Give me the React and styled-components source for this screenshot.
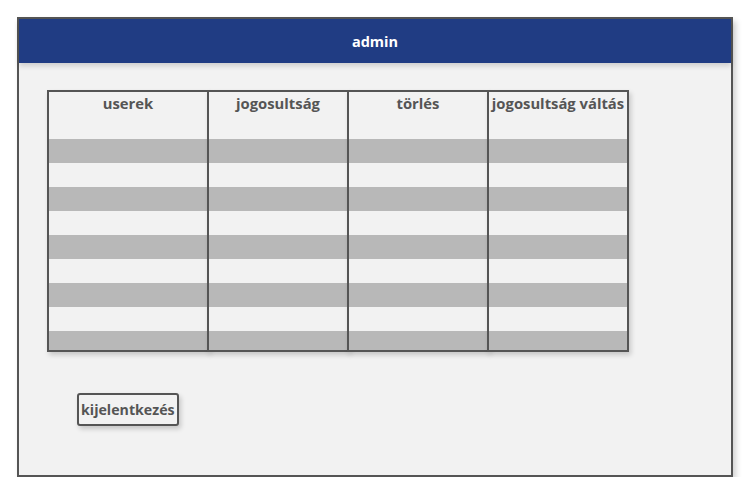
import React from "react";
import styled, { createGlobalStyle } from "styled-components";

const Global = createGlobalStyle`
  body {
    margin: 0;
    background: #ffffff;
    font-family: "Open Sans", "DejaVu Sans", sans-serif;
  }
`;

const Frame = styled.div`
  box-sizing: border-box;
  margin: 17px 0 0 17px;
  width: 716px;
  height: 460px;
  border: 2px solid #555555;
  background: #f2f2f2;
  box-shadow: 3px 4px 6px rgba(0, 0, 0, 0.18);
  display: flex;
  flex-direction: column;
`;

const TopBar = styled.div`
  height: 44px;
  background: #203c83;
  color: #ffffff;
  font-weight: 700;
  font-size: 14.5px;
  display: flex;
  align-items: center;
  justify-content: center;
  box-shadow: 0 3px 5px rgba(0, 0, 0, 0.15);
`;

const Content = styled.div`
  padding: 27px 0 0 28px;
  display: flex;
  flex-direction: column;
  align-items: flex-start;
`;

const Table = styled.div`
  display: flex;
`;

const Column = styled.div`
  box-sizing: border-box;
  width: ${(p) => p.$width}px;
  height: 262px;
  border: 2px solid #555555;
  margin-left: ${(p) => (p.$first ? 0 : -2)}px;
  background: #f2f2f2;
  overflow: hidden;
  box-shadow: 2px 3px 5px rgba(0, 0, 0, 0.18);
  display: flex;
  flex-direction: column;
`;

const HeadCell = styled.div`
  height: 46px;
  flex-shrink: 0;
  padding-top: 1px;
  text-align: center;
  font-weight: 700;
  font-size: 14.8px;
  line-height: 20px;
  color: #555555;
  white-space: nowrap;
`;

const Stripe = styled.div`
  height: 24px;
  flex-shrink: 0;
  background: ${(p) => (p.$dark ? "#b8b8b8" : "#f2f2f2")};
`;

const LogoutButton = styled.button`
  margin: 41px 0 0 30px;
  box-sizing: border-box;
  height: 33px;
  padding: 0 2px;
  border: 2px solid #555555;
  border-radius: 3px;
  background: #f2f2f2;
  color: #555555;
  font-family: "Open Sans", "DejaVu Sans", sans-serif;
  font-weight: 700;
  font-size: 14.2px;
  box-shadow: 2px 3px 5px rgba(0, 0, 0, 0.18);
`;

const columns = [
  { title: "userek", width: 162 },
  { title: "jogosultság", width: 142 },
  { title: "törlés", width: 142 },
  { title: "jogosultság váltás", width: 142 },
];

export default function App() {
  return (
    <>
      <Global />
      <Frame>
        <TopBar>admin</TopBar>
        <Content>
          <Table>
            {columns.map((c, i) => (
              <Column key={c.title} $width={c.width} $first={i === 0}>
                <HeadCell>{c.title}</HeadCell>
                {Array.from({ length: 9 }).map((_, j) => (
                  <Stripe key={j} $dark={j % 2 === 0} />
                ))}
              </Column>
            ))}
          </Table>
          <LogoutButton>kijelentkezés</LogoutButton>
        </Content>
      </Frame>
    </>
  );
}
